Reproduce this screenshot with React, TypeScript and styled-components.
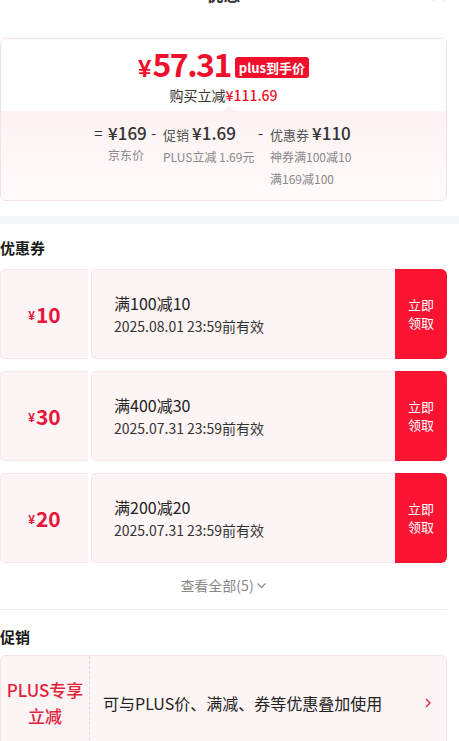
import React from 'react';
import styled, { createGlobalStyle } from 'styled-components';

const GlobalStyle = createGlobalStyle`
    html, body {
        margin: 0;
        padding: 0;
        background: #ffffff;
        overflow: hidden;
    }
    body {
        font-family: "Noto Sans CJK SC", "Noto Sans", sans-serif;
        color: #1a1a1a;
    }
`;

const RED = '#f0102c';

const Page = styled.div`
    width: 459px;
    height: 741px;
    overflow: hidden;
`;

const Inner = styled.div`
    padding: 0 12px 0 0;
`;

const Header = styled.div`
    height: 26px;
    margin-top: -20px;
    display: flex;
    align-items: center;
    justify-content: center;
    position: relative;
`;

const HeaderTitle = styled.div`
    font-size: 17px;
    font-weight: 700;
    color: #333;
`;

const CloseIcon = styled.svg`
    position: absolute;
    right: 0;
    top: 6px;
`;

const PriceCard = styled.div`
    margin-top: 32px;
    border: 1px solid #f4e1e4;
    border-radius: 6px;
    overflow: hidden;
`;

const PriceTop = styled.div`
    background: #fff;
    display: flex;
    flex-direction: column;
    align-items: center;
    padding: 9px 0 6px;
`;

const PriceLine = styled.div`
    display: flex;
    align-items: center;
    gap: 4px;
    height: 36px;
`;

const BigPrice = styled.div`
    color: ${RED};
    font-weight: 700;
    font-size: 32px;
    letter-spacing: -1.5px;
    line-height: 36px;
`;

const Yen = styled.span<{ $size: number }>`
    font-family: "Liberation Sans", "Noto Sans", sans-serif;
    font-weight: 700;
    font-size: ${p => p.$size}px;
    letter-spacing: 0;
    margin-right: 1px;
`;

const PlusBadge = styled.div`
    background: ${RED};
    color: #fff;
    font-size: 13px;
    font-weight: 700;
    line-height: 21px;
    padding: 0 4px;
    border-radius: 3px;
    margin-top: 3px;
`;

const SaveLine = styled.div`
    font-size: 14px;
    line-height: 20px;
    color: #333;
    margin-top: 1px;
    b {
        color: ${RED};
        font-weight: 500;
    }
`;

const PriceBottom = styled.div`
    position: relative;
    background: linear-gradient(180deg, #fdf2f3 0%, #fffafa 100%);
    display: flex;
    justify-content: center;
    padding: 11px 0 10px 2px;
    &::before {
        content: '';
        position: absolute;
        top: -5px;
        left: 223px;
        border-left: 5px solid transparent;
        border-right: 5px solid transparent;
        border-bottom: 5px solid #fdf0f2;
    }
`;

const Term = styled.div`
    display: flex;
    align-items: flex-start;
`;

const Op = styled.div`
    font-size: 15px;
    color: #333;
    line-height: 22px;
    width: 11px;
    margin-right: 4px;
    text-align: center;
`;

const TermBody = styled.div<{ $w: number }>`
    display: flex;
    flex-direction: column;
    width: ${p => p.$w}px;
`;

const Amount = styled.div`
    font-size: 17px;
    font-weight: 500;
    color: #333;
    line-height: 22px;
    white-space: nowrap;
    small {
        font-size: 13px;
        font-weight: 400;
        color: #555;
        margin-right: 3px;
    }
`;

const Note = styled.div`
    font-size: 12px;
    color: #888;
    line-height: 22px;
    white-space: nowrap;
`;

const GrayBand = styled.div`
    height: 8px;
    margin: 15px -12px 0 0;
    background: #f4f6fa;
`;

const SectionTitle = styled.div`
    font-size: 15px;
    font-weight: 700;
    color: #1a1a1a;
    line-height: 22px;
`;

const CouponTitle = styled(SectionTitle)`
    margin-top: 13px;
`;

const CouponList = styled.div`
    display: flex;
    flex-direction: column;
    gap: 12px;
    margin-top: 10px;
`;

const Coupon = styled.div`
    display: flex;
    height: 90px;
`;

const CouponLeft = styled.div`
    width: 88px;
    background: #fdf4f5;
    border: 1px solid #f6e6e8;
    border-right: none;
    border-radius: 5px 0 0 5px;
    box-sizing: border-box;
    display: flex;
    align-items: center;
    justify-content: center;
    color: #e8163a;
    font-weight: 700;
    font-size: 21px;
    span {
        margin-top: 3px;
    }
`;

const CouponMain = styled.div`
    flex: 1;
    margin-left: 3px;
    background: #fdf4f5;
    border: 1px solid #f6e6e8;
    border-right: none;
    border-radius: 5px 0 0 5px;
    display: flex;
    flex-direction: column;
    justify-content: center;
    padding-left: 22px;
`;

const CouponRule = styled.div`
    font-size: 16px;
    color: #222;
    line-height: 23px;
`;

const CouponDate = styled.div`
    font-size: 14px;
    color: #333;
    line-height: 22px;
`;

const TakeButton = styled.div`
    width: 52px;
    background: #fa1432;
    border-radius: 0 6px 6px 0;
    color: #fff;
    font-size: 13px;
    line-height: 18px;
    display: flex;
    align-items: center;
    justify-content: center;
    text-align: center;
`;

const MoreRow = styled.div`
    display: flex;
    align-items: center;
    justify-content: center;
    gap: 2px;
    height: 24px;
    margin-top: 10px;
    font-size: 14px;
    color: #888;
`;

const Divider = styled.div`
    height: 1px;
    background: #eeeeee;
    margin-top: 12px;
`;

const PromoTitle = styled(SectionTitle)`
    margin-top: 16px;
`;

const PromoCard = styled.div`
    margin-top: 7px;
    height: 94px;
    display: flex;
    border: 1px solid #f4e1e4;
    border-radius: 6px;
    background: #fdf4f5;
`;

const PromoTag = styled.div`
    width: 88px;
    border-right: 1px dashed #ead3d6;
    display: flex;
    flex-direction: column;
    align-items: center;
    justify-content: center;
    color: #e2233c;
    font-size: 17px;
    font-weight: 500;
    line-height: 26px;
`;

const PromoText = styled.div`
    flex: 1;
    display: flex;
    align-items: center;
    padding: 0 14px 0 13px;
    font-size: 16px;
    color: #222;
    justify-content: space-between;
`;

const coupons = [
    { amount: '10', rule: '满100减10', date: '2025.08.01 23:59前有效' },
    { amount: '30', rule: '满400减30', date: '2025.07.31 23:59前有效' },
    { amount: '20', rule: '满200减20', date: '2025.07.31 23:59前有效' },
];

const App: React.FC = () => {
    return (
        <Page>
            <GlobalStyle />
            <Inner>
                <Header>
                    <HeaderTitle>优惠</HeaderTitle>
                    <CloseIcon width="16" height="16" viewBox="0 0 16 16">
                        <path d="M2 2 L14 14 M14 2 L2 14" stroke="#333" strokeWidth="1.4" fill="none" />
                    </CloseIcon>
                </Header>

                <PriceCard>
                    <PriceTop>
                        <PriceLine>
                            <BigPrice><Yen $size={24}>¥</Yen>57.31</BigPrice>
                            <PlusBadge>plus到手价</PlusBadge>
                        </PriceLine>
                        <SaveLine>购买立减<b>¥111.69</b></SaveLine>
                    </PriceTop>
                    <PriceBottom>
                        <Term>
                            <Op>=</Op>
                            <TermBody $w={40}>
                                <Amount>¥169</Amount>
                                <Note>京东价</Note>
                            </TermBody>
                        </Term>
                        <Term>
                            <Op>-</Op>
                            <TermBody $w={92}>
                                <Amount><small>促销</small>¥1.69</Amount>
                                <Note>PLUS立减 1.69元</Note>
                            </TermBody>
                        </Term>
                        <Term>
                            <Op>-</Op>
                            <TermBody $w={86}>
                                <Amount><small>优惠券</small>¥110</Amount>
                                <Note>神券满100减10</Note>
                                <Note>满169减100</Note>
                            </TermBody>
                        </Term>
                    </PriceBottom>
                </PriceCard>

                <GrayBand />

                <CouponTitle>优惠券</CouponTitle>
                <CouponList>
                    {coupons.map(c => (
                        <Coupon key={c.rule}>
                            <CouponLeft><Yen $size={12}>¥</Yen>{c.amount}</CouponLeft>
                            <CouponMain>
                                <CouponRule>{c.rule}</CouponRule>
                                <CouponDate>{c.date}</CouponDate>
                            </CouponMain>
                            <TakeButton>立即<br />领取</TakeButton>
                        </Coupon>
                    ))}
                </CouponList>

                <MoreRow>
                    查看全部(5)
                    <svg width="11" height="11" viewBox="0 0 11 11">
                        <path d="M1.5 3.5 L5.5 7.5 L9.5 3.5" stroke="#888" strokeWidth="1.1" fill="none" />
                    </svg>
                </MoreRow>
                <Divider />

                <PromoTitle>促销</PromoTitle>
                <PromoCard>
                    <PromoTag>
                        <div>PLUS专享</div>
                        <div>立减</div>
                    </PromoTag>
                    <PromoText>
                        可与PLUS价、满减、券等优惠叠加使用
                        <svg width="8" height="12" viewBox="0 0 8 12">
                            <path d="M2 2 L6 6 L2 10" stroke="#e2233c" strokeWidth="1.3" fill="none" />
                        </svg>
                    </PromoText>
                </PromoCard>
            </Inner>
        </Page>
    );
};

export default App;
